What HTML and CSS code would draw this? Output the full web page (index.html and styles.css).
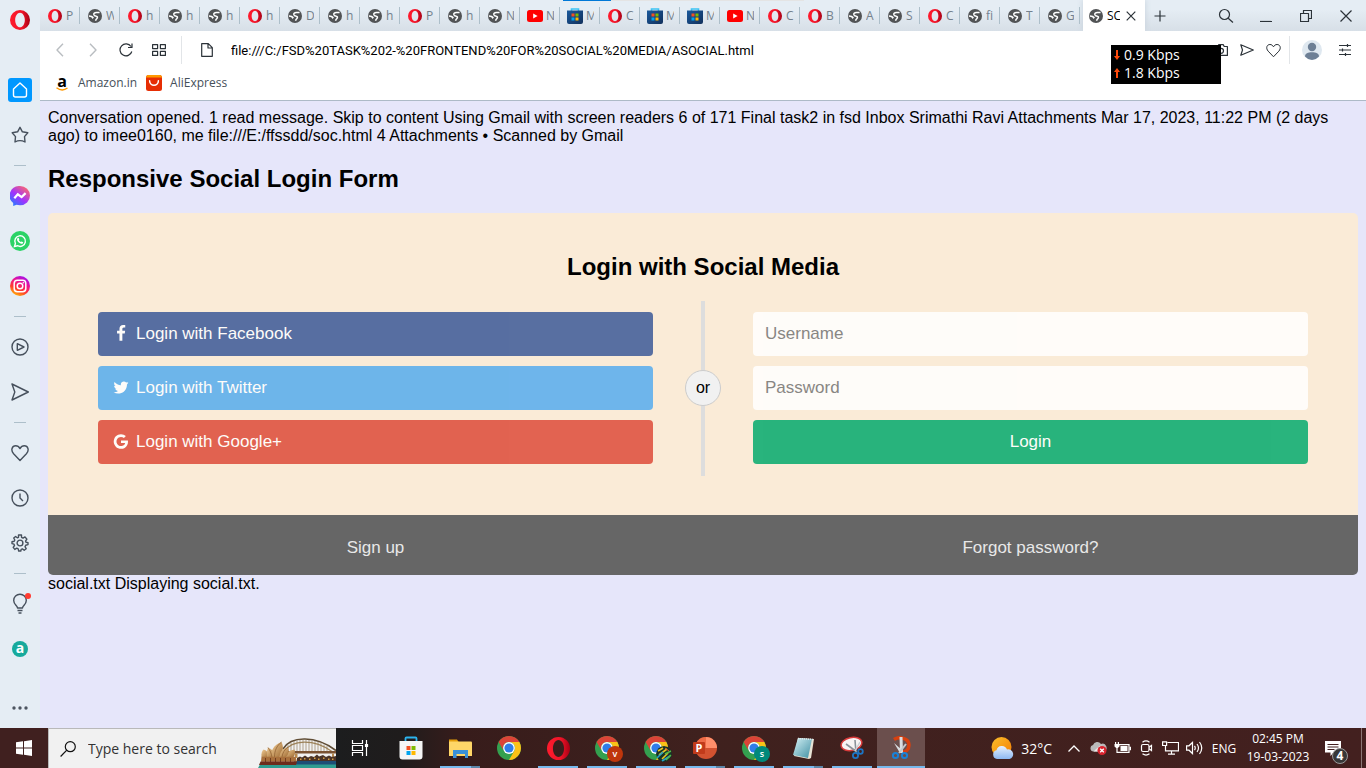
FILE: index.html
```html
<!DOCTYPE html>
<html lang="en">
<head>
<meta charset="utf-8">
<title>SOCIAL</title>
<meta name="viewport" content="width=device-width, initial-scale=1">
<link rel="stylesheet" href="styles.css">
</head>
<body>
<svg class="sprite" aria-hidden="true">
  <defs>
    <linearGradient id="redO" x1="0" y1="0" x2="1" y2="0"><stop offset="0" stop-color="#ff1b2d"/><stop offset=".6" stop-color="#f01428"/><stop offset="1" stop-color="#a70014"/></linearGradient>
    <linearGradient id="bag" x1="0" y1="0" x2="1" y2="1"><stop offset="0" stop-color="#1b5a9c"/><stop offset="1" stop-color="#12305c"/></linearGradient>
    <linearGradient id="msgr" x1="0" y1="1" x2=".8" y2="0"><stop offset="0" stop-color="#0a8cff"/><stop offset=".5" stop-color="#a033ff"/><stop offset="1" stop-color="#ff6a6a"/></linearGradient>
    <linearGradient id="insta" x1=".2" y1="1" x2=".7" y2="0"><stop offset="0" stop-color="#ffc400"/><stop offset=".35" stop-color="#ff3d2e"/><stop offset=".65" stop-color="#f0148c"/><stop offset="1" stop-color="#a010f0"/></linearGradient>
    <linearGradient id="sun" x1="0" y1="0" x2="1" y2="1"><stop offset="0" stop-color="#fbc02d"/><stop offset="1" stop-color="#f57c00"/></linearGradient>
    <linearGradient id="cloud" x1="0" y1="0" x2="0" y2="1"><stop offset="0" stop-color="#e8f1fd"/><stop offset="1" stop-color="#8db8f2"/></linearGradient>
    <linearGradient id="shell" x1="0" y1="0" x2="1" y2="1"><stop offset="0" stop-color="#efcb94"/><stop offset="1" stop-color="#a06c34"/></linearGradient>
    <linearGradient id="note" x1="0" y1="0" x2="1" y2="1"><stop offset="0" stop-color="#d6f2f6"/><stop offset="1" stop-color="#3f8fa3"/></linearGradient>
  </defs>
  <symbol id="opera" viewBox="0 0 24 24"><path fill="url(#redO)" fill-rule="evenodd" d="M12 0a12 12 0 1 0 0 24a12 12 0 1 0 0-24zM12 3.200c3.300 0 5.800 3.900 5.800 8.800s-2.500 8.800-5.800 8.800s-5.800-3.900-5.800-8.800s2.500-8.800 5.800-8.800z"/></symbol>
  <symbol id="globe" viewBox="0 0 16 16"><circle cx="8" cy="8" r="8" fill="#515355"/><path fill="none" stroke="#fff" stroke-width="1.700" d="M13.200 4H9.600Q6.400 4.200 6.600 6.200Q6.900 8 9.300 8.200Q11.600 8.700 10.400 10.600Q9 11.500 8.600 13.400"/><path fill="#fff" d="M1 7.200l3.400.5l2.400 1.800l-1.400 1.800l-1.700-1.900L1 8.800z"/></symbol>
  <symbol id="youtube" viewBox="0 0 16 12"><rect width="16" height="12" rx="2.500" fill="#f00"/><path fill="#fff" d="M6.200 3.500v5L10.600 6z"/></symbol>
  <symbol id="msstore" viewBox="0 0 16 16"><path fill="none" stroke="#3cc3f3" stroke-width="1.600" d="M4.500 3.500V1h7v2.500"/><path fill="url(#bag)" d="M0 2.500h16V14a2 2 0 0 1-2 2H2a2 2 0 0 1-2-2z"/><path fill="#f25022" d="M4.500 5.500h3v3h-3z"/><path fill="#7fba00" d="M8.500 5.500h3v3h-3z"/><path fill="#00a4ef" d="M4.500 9.500h3v3h-3z"/><path fill="#ffb900" d="M8.500 9.500h3v3h-3z"/></symbol>
  <symbol id="heart" viewBox="0 0 18 18"><path d="M9 16.500L2.600 9.800C-.6 6.200 1 1.800 4.700 1.800c2 0 3.300 1 4.300 2.800c1-1.800 2.300-2.800 4.300-2.800c3.700 0 5.300 4.400 2.100 8z"/></symbol>
  <symbol id="send" viewBox="0 0 18 18"><path d="M1 1L17.300 9L1 17L3.800 9z"/></symbol>
  <symbol id="chrome" viewBox="0 0 24 24"><circle cx="12" cy="12" r="12" fill="#34a04f"/><path fill="#db4437" d="M12 6h10.390A12 12 0 0 0 1.610 6L6.800 15A6 6 0 0 1 12 6z"/><path fill="#fbc116" d="M22.390 6H12a6 6 0 0 1 5.200 9L12 24A12 12 0 0 0 22.390 6z"/><circle cx="12" cy="12" r="5.900" fill="#fff"/><circle cx="12" cy="12" r="4.600" fill="#2f7de9"/></symbol>
</svg>

<div class="workspace">
  <nav class="sidebar" aria-label="Sidebar">
    <button class="side-logo" aria-label="Opera menu"><svg width="20" height="20"><use href="#opera"/></svg></button>
    <button class="side-item" aria-label="Speed dial"><span class="side-home"><svg class="line light" width="18" height="18" viewBox="0 0 18 18"><path d="M2.500 8L9 2l6.500 6v6a2 2 0 0 1-2 2h-9a2 2 0 0 1-2-2z"/></svg></span></button>
    <button class="side-item" aria-label="Pinboards"><svg class="line" width="18" height="18" viewBox="0 0 18 18"><path d="M9 1.300l2.400 4.500l5.400.9l-3.300 3.900l.5 5.400q-2.500-1.400-5-1.400T4 16l.5-5.400L1.200 6.700l5.400-.9z"/></svg></button>
    <hr class="side-rule">
    <button class="side-item" aria-label="Messenger"><svg width="20" height="20" viewBox="0 0 20 20"><path fill="url(#msgr)" d="M10 0a10 9.600 0 0 1 0 19.200c-1.500 0-2.500-.2-3.500-.5L3.200 20v-3A10 9.600 0 0 1 10 0z"/><path fill="none" stroke="#fff" stroke-width="2.200" d="M4.300 12.300l3.500-4l3.800 2.800l4-4"/></svg></button>
    <button class="side-item" aria-label="WhatsApp"><svg width="20" height="20" viewBox="0 0 20 20"><circle cx="10" cy="10" r="10" fill="#2bd366"/><path fill="none" stroke="#fff" stroke-width="1.400" d="M4.500 15.500l.9-3A5.300 5.300 0 1 1 7.500 14.700z"/><path fill="#fff" d="M7.600 7l1-.2l.8 1.600l-.6.9c.5.900 1.100 1.400 2 1.800l.8-.7l1.600.8c0 1.200-1.100 1.700-2 1.500c-2.400-.5-4.200-2.600-4.200-4.200c0-.6.300-1.200.6-1.500z"/></svg></button>
    <button class="side-item" aria-label="Instagram"><svg width="20" height="20" viewBox="0 0 20 20"><circle cx="10" cy="10" r="10" fill="url(#insta)"/><g fill="none" stroke="#fff" stroke-width="1.500"><rect x="4.200" y="4.200" width="11.600" height="11.600" rx="3.200"/><circle cx="10" cy="10" r="2.800"/></g><circle cx="13.300" cy="6.700" r=".8" fill="#fff"/></svg></button>
    <hr class="side-rule">
    <button class="side-item" aria-label="Player"><svg class="line" width="18" height="18" viewBox="0 0 18 18"><circle cx="9" cy="9" r="8"/><path d="M6.300 5.700L13 9l-6.700 3.300z"/></svg></button>
    <button class="side-item" aria-label="My Flow"><svg class="line" width="18" height="18"><use href="#send"/></svg></button>
    <hr class="side-rule">
    <button class="side-item" aria-label="Bookmarks"><svg class="line" width="18" height="18"><use href="#heart"/></svg></button>
    <button class="side-item" aria-label="History"><svg class="line" width="18" height="18" viewBox="0 0 18 18"><circle cx="9" cy="9" r="8"/><path d="M9 4.500V9l3 3"/></svg></button>
    <button class="side-item" aria-label="Settings"><svg class="line" width="18" height="18" viewBox="0 0 18 18"><circle cx="9" cy="9" r="2.900"/><path d="M7.500 1h3v2.300l1.500.8l2-1.200l1.900 2.300L14.600 7l.3 1.200l2.100.4v2l-2.300.6l-.7 1.500l1.200 2l-2 1.600l-1.800-1.400l-1.200.4L9.800 17H7.700l-.5-2.200l-1.400-.6l-2 1.200l-1.600-2l1.300-1.900l-.5-1.300L1 9.600V7.700l2.200-.5l.6-1.200l-1.100-2l1.900-1.500l1.700 1.300l1.200-.5z"/></svg></button>
    <hr class="side-rule">
    <button class="side-item" aria-label="Tips"><svg width="24" height="22" viewBox="0 0 24 22"><g class="line"><path d="M9.500 15c0-2.500-3.800-3.500-3.800-7.500a6.300 6.300 0 0 1 12.600 0c0 4-3.800 5-3.800 7.500z"/><path d="M9.500 17.500h5M10.500 20h3"/></g><circle cx="20" cy="3" r="3" fill="#ff3b30"/></svg></button>
    <button class="side-item" aria-label="Amazon assistant"><span class="side-a">a</span></button>
    <button class="side-more" aria-label="Sidebar setup"><svg width="16" height="4" viewBox="0 0 16 4" fill="#4d5560"><circle cx="2" cy="2" r="1.700"/><circle cx="8" cy="2" r="1.700"/><circle cx="14" cy="2" r="1.700"/></svg></button>
  </nav>

  <div class="browser">
    <div class="tabstrip">
      <div class="tabs">
        <button class="tab"><svg><use href="#opera"/></svg><span>P</span></button>
        <button class="tab"><svg><use href="#globe"/></svg><span>W</span></button>
        <button class="tab"><svg><use href="#opera"/></svg><span>h</span></button>
        <button class="tab"><svg><use href="#globe"/></svg><span>h</span></button>
        <button class="tab"><svg><use href="#globe"/></svg><span>h</span></button>
        <button class="tab"><svg><use href="#opera"/></svg><span>h</span></button>
        <button class="tab"><svg><use href="#globe"/></svg><span>D</span></button>
        <button class="tab"><svg><use href="#globe"/></svg><span>h</span></button>
        <button class="tab"><svg><use href="#globe"/></svg><span>h</span></button>
        <button class="tab"><svg><use href="#opera"/></svg><span>P</span></button>
        <button class="tab"><svg><use href="#globe"/></svg><span>h</span></button>
        <button class="tab"><svg><use href="#globe"/></svg><span>N</span></button>
        <button class="tab wide"><svg><use href="#youtube"/></svg><span>N</span></button>
        <button class="tab wide"><svg><use href="#msstore"/></svg><span>M</span></button>
        <button class="tab"><svg><use href="#opera"/></svg><span>C</span></button>
        <button class="tab wide"><svg><use href="#msstore"/></svg><span>M</span></button>
        <button class="tab wide"><svg><use href="#msstore"/></svg><span>M</span></button>
        <button class="tab wide"><svg><use href="#youtube"/></svg><span>N</span></button>
        <button class="tab"><svg><use href="#opera"/></svg><span>C</span></button>
        <button class="tab"><svg><use href="#opera"/></svg><span>B</span></button>
        <button class="tab"><svg><use href="#globe"/></svg><span>A</span></button>
        <button class="tab"><svg><use href="#globe"/></svg><span>S</span></button>
        <button class="tab"><svg><use href="#opera"/></svg><span>C</span></button>
        <button class="tab"><svg><use href="#globe"/></svg><span>fi</span></button>
        <button class="tab"><svg><use href="#globe"/></svg><span>T</span></button>
        <button class="tab"><svg><use href="#globe"/></svg><span>G</span></button>
      </div>
      <div class="tab-active"><svg class="tab-icon"><use href="#globe"/></svg><span class="tab-title">SC</span><button class="tab-close" aria-label="Close tab"><svg class="line dark" width="10" height="10" viewBox="0 0 10 10"><path d="M.7.7l8.600 8.600M9.300.7L.7 9.300"/></svg></button></div>
      <button class="tab-new" aria-label="New tab"><svg class="line dark" width="12" height="12" viewBox="0 0 12 12"><path d="M6 .5v11M.5 6h11"/></svg></button>
      <div class="window-controls">
        <button aria-label="Search tabs"><svg class="line dark" width="16" height="16" viewBox="0 0 16 16"><circle cx="6.500" cy="6.500" r="5"/><path d="M10.200 10.200l4.800 4.300"/></svg></button>
        <button aria-label="Minimise"><svg class="line dark" width="12" height="12" viewBox="0 0 12 12"><path d="M0 11.500h12"/></svg></button>
        <button aria-label="Restore"><svg class="line dark" width="12" height="12" viewBox="0 0 12 12"><path d="M.5 3.500h8v8h-8zM3.500 3.500v-3h8v8h-3"/></svg></button>
        <button aria-label="Close"><svg class="line dark" width="12" height="12" viewBox="0 0 12 12"><path d="M.5.5l11 11M11.500.5l-11 11"/></svg></button>
      </div>
    </div>

    <div class="toolbar">
      <button class="tool" aria-label="Back"><svg class="line faint" width="8" height="14" viewBox="0 0 8 14"><path d="M7 .8L1 7l6 6.200"/></svg></button>
      <button class="tool" aria-label="Forward"><svg class="line faint" width="8" height="14" viewBox="0 0 8 14"><path d="M1 .8L7 7l-6 6.200"/></svg></button>
      <button class="tool" aria-label="Reload"><svg class="line dark" width="14" height="14" viewBox="0 0 14 14"><path d="M12.800 8.500A6 6 0 1 1 12 3.500M13 .5v4H9"/></svg></button>
      <button class="tool" aria-label="Speed dial"><svg class="line dark" width="14" height="12" viewBox="0 0 14 12"><path d="M.6.600h5v4h-5zM8.400.600h5v4h-5zM.6 7.400h5v4h-5zM8.400 7.400h5v4h-5z"/></svg></button>
      <span class="tool-rule"></span>
      <button class="tool page-info" aria-label="Page information"><svg class="line dark" width="12" height="14" viewBox="0 0 12 14"><path d="M.7.700h6.600l4 4v8.600H.7zM7 .7V5h4.300"/></svg></button>
      <input class="address" type="text" aria-label="Address" value="file:///C:/FSD%20TASK%202-%20FRONTEND%20FOR%20SOCIAL%20MEDIA/ASOCIAL.html">
      <button class="tool slim" aria-label="Snapshot"><svg class="line dark" width="14" height="12" viewBox="0 0 14 12"><path d="M.6 2.500h3.200l1-1.900h4.400l1 1.900h3.200v8.900H.6z"/><circle cx="7" cy="6.800" r="2.500"/></svg></button>
      <button class="tool slim" aria-label="Send to My Flow"><svg class="line dark" width="14" height="12" viewBox="0 0 14 12"><path d="M.8.800L13.300 6L.8 11.200L2.500 6z"/></svg></button>
      <button class="tool slim" aria-label="Add to bookmarks"><svg class="line dark" width="15" height="15"><use href="#heart"/></svg></button>
      <span class="tool-rule short"></span>
      <button class="tool profile" aria-label="Profile"><svg width="20" height="20" viewBox="0 0 20 20"><circle cx="10" cy="10" r="10" fill="#dfe8f0"/><circle cx="10" cy="7" r="4.200" fill="#6d7f95"/><path fill="#6d7f95" d="M3 16.500c0-3 3-4.200 7-4.200s7 1.200 7 4.200A10 10 0 0 1 10 20a10 10 0 0 1-7-3.500z"/></svg></button>
      <button class="tool" aria-label="Easy setup"><svg class="line dark" width="12" height="12" viewBox="0 0 12 12"><path d="M0 1.500h12M0 6h12M0 10.500h12M8.500 0v3M3.500 4.500v3M6.500 9v3"/></svg></button>
    </div>

    <nav class="bookmarks" aria-label="Bookmarks bar">
      <a href="#amazon"><span class="amazon-a">a<svg width="12" height="4" viewBox="0 0 12 4"><path fill="none" stroke="#f90" stroke-width="1.400" d="M.5.700Q6 5 11.500 1"/></svg></span>Amazon.in</a>
      <a href="#aliexpress"><svg width="16" height="16" viewBox="0 0 16 16"><rect width="16" height="16" rx="2.500" fill="#e62e04"/><path fill="#f90" d="M2.500 0h11A2.500 2.500 0 0 1 16 2.500H0A2.500 2.500 0 0 1 2.500 0z"/><path fill="none" stroke="#fff" stroke-width="1.500" stroke-linecap="round" d="M3.600 5.800a4.400 4.400 0 0 0 8.800 0"/></svg>AliExpress</a>
    </nav>

    <main class="page">
      Conversation opened. 1 read message. Skip to content Using Gmail with screen readers 6 of 171 Final task2 in fsd Inbox Srimathi Ravi Attachments Mar 17, 2023, 11:22 PM (2 days ago) to imee0160, me file:///E:/ffssdd/soc.html 4 Attachments • Scanned by Gmail
      <h2>Responsive Social Login Form</h2>
      <form class="card" onsubmit="return false">
        <h2 class="card-title">Login with Social Media</h2>
        <div class="card-row">
          <div class="col">
            <a href="#fb" class="btn fb"><svg viewBox="0 0 1792 1792"><path d="M1343 12v264h-157q-86 0-116 36t-30 108v189h293l-39 296h-254v759h-306v-759h-255v-296h255v-218q0-186 104-288.500t277-102.500q147 0 228 12z"/></svg>Login with Facebook</a>
            <a href="#twitter" class="btn twitter"><svg viewBox="0 0 1792 1792"><path d="M1684 408q-67 98-162 167 1 14 1 42 0 130-38 259.500t-115.500 248.500-184.500 210.500-258 146-323 54.500q-271 0-496-145 35 4 78 4 225 0 401-138-105-2-188-64.500t-114-159.500q33 5 61 5 43 0 85-11-112-23-185.500-111.500t-73.500-205.500v-4q68 38 146 41-66-44-105-115t-39-154q0-88 44-163 121 149 294.500 238.500t371.500 99.500q-8-38-8-74 0-134 94.500-228.500t228.500-94.500q140 0 236 102 109-21 205-78-37 115-142 178 93-10 186-50z"/></svg>Login with Twitter</a>
            <a href="#google" class="btn google"><svg viewBox="0 0 1792 1792"><path d="M896 786h725q12 67 12 128 0 217-91 387.500t-259.500 266.500-386.500 96q-157 0-299-60.500t-245-163.500-163.500-245-60.500-299 60.500-299 163.500-245 245-163.500 299-60.500q300 0 515 201l-209 201q-123-119-306-119-129 0-238.500 65t-173.500 176.500-64 243.500 64 243.500 173.500 176.500 238.500 65q87 0 160-24t120-60 82-82 51.500-87 22.500-78h-436v-264z"/></svg>Login with Google+</a>
          </div>
          <div class="divider"><span class="or">or</span></div>
          <div class="col">
            <input class="field" type="text" placeholder="Username" aria-label="Username">
            <input class="field" type="password" placeholder="Password" aria-label="Password">
            <button class="btn submit" type="submit">Login</button>
          </div>
        </div>
      </form>
      <div class="card-footer">
        <a href="#signup">Sign up</a>
        <a href="#forgot">Forgot password?</a>
      </div>
      social.txt Displaying social.txt.
    </main>
  </div>

  <div class="top-progress"></div>
  <div class="netspeed">
    <div><svg width="6" height="10" viewBox="0 0 6 10" fill="#ff4a0c"><path d="M2 0h2v6h2L3 10L0 6h2z"/></svg>0.9 Kbps</div>
    <div><svg width="6" height="10" viewBox="0 0 6 10" fill="#ff4a0c"><path d="M2 10h2V4h2L3 0L0 4h2z"/></svg>1.8 Kbps</div>
  </div>
</div>

<footer class="taskbar">
  <button class="start" aria-label="Start"><svg width="16" height="16" viewBox="0 0 16 16" fill="#fff"><path d="M0 2.300L7 1.300v6.200H0zM8 1.200L16 0v7.500H8zM0 8.500h7v6.200l-7-1zM8 8.500h8V16l-8-1.200z"/></svg></button>
  <div class="search">
    <svg class="search-icon" width="16" height="16" viewBox="0 0 16 16"><circle cx="10.300" cy="5.700" r="5" fill="none" stroke="#111" stroke-width="1.200"/><path stroke="#111" stroke-width="1.200" d="M6.800 9.200L.6 15.500"/></svg>
    <input type="text" placeholder="Type here to search" aria-label="Search">
    <svg class="harbour" width="78" height="30" viewBox="0 0 78 30">
      <path fill="none" stroke="#5f4c34" stroke-width="1.600" d="M25 11C33-2.500 58-2.500 78 12.500"/>
      <path fill="none" stroke="#a08458" stroke-width="1.300" d="M26 14C34 1 56 1 74 13.500"/>
      <path stroke="#93805e" stroke-width=".7" d="M30 7v7M33 4.500V14M36 3v11M39 2v12M42 1.500V14M45 1.500V14M48 1.500V14M51 2v12M54 2.500V14M57 3v11M60 4v10M63 5v9M66 6.500V14M69 8v6"/>
      <path fill="#7a5232" d="M26 13h52v2.600H26z"/>
      <path fill="#b88a4f" d="M37 15.600h2.500V20H37zM74 15.600h2V20h-2z"/>
      <path fill="#4b3326" d="M39 20l3-1.500 2 1 3-2 3 2 3-1.500 3 1 3-2.500 2 2 4-1.500 3 2 3-1.500 3 1.500 4-1v6H39z"/>
      <path fill="#d6a045" d="M42 20.500h1.500V22H42zM46 20h1.500v1.500H46zM51 20.500h1.500V22H51zM56 19.500h1.500V21H56zM60 20.500h1.500V22H60zM65 19.500h1.500V21H65zM70 20.500h1.500V22H70zM74 20.500h1.500V22H74z"/>
      <path fill="#1d4f77" d="M36 23h42v4H36z"/>
      <path fill="#2f9d91" d="M2 26.500h76V30H0z"/>
      <path fill="url(#shell)" d="M28 19c.500-4 2.500-6.500 8.500-7.500c1 3 .5 5.500-1 7.500z"/>
      <path fill="url(#shell)" d="M3.500 19C3 15.500 4 13 5.500 11.500C9 12.500 11.500 15.500 12 19z"/>
      <path fill="url(#shell)" d="M9 19c0-3-.5-6 1-9.500c4 1.500 7 5 7.500 9.500z"/>
      <path fill="url(#shell)" d="M14 19c-2-6 1.500-12 9.500-15c2.500 5.500 1.500 11-2 15z"/>
      <path fill="url(#shell)" d="M21.500 19c.5-5 3-8.500 8.500-10c1.500 4 .5 7.500-2 10z"/>
      <path fill="none" stroke="#8a5a2c" stroke-width=".7" d="M16.500 19c0-6 2-11 7-15M24 19c.5-4 2.500-7.500 6-10M10 9.500c2 3 3.500 6 4 9.500"/>
      <path fill="#a9703c" d="M3.500 18.700h34l1.500 5H3z"/>
      <path stroke="#6f3d20" d="M7.500 20v4M12.500 20v4M17.500 20v4M22.500 20v4M27.500 20v4M32.500 20v4"/>
      <path fill="#6d2c1c" d="M2.500 23.500H39l-1 3.500H1z"/>
    </svg>
  </div>
  <div class="apps">
    <button class="app task-view" aria-label="Task View"><svg width="18" height="16" viewBox="0 0 18 16" fill="none" stroke="#fff" stroke-width="1.200"><path d="M1.500 0v3.500h10V0M1.500 16v-3.500h10V16M1.500 5.500h10v5h-10zM15.500 0v16"/><path fill="#fff" d="M14.500 4.500h2v2h-2z"/></svg></button>
    <button class="app" aria-label="Microsoft Store"><svg width="24" height="24" viewBox="0 0 24 24"><path fill="none" stroke="#2cb4ee" stroke-width="1.800" d="M6.500 6V2.500a1 1 0 0 1 1-1h9a1 1 0 0 1 1 1V6"/><path fill="#f5f5f5" d="M.5 5h23v15.500a3 3 0 0 1-3 3h-17a3 3 0 0 1-3-3z"/><path fill="#f25022" d="M7.500 10h4v4h-4z"/><path fill="#7fba00" d="M12.500 10h4v4h-4z"/><path fill="#00a4ef" d="M7.500 15h4v4h-4z"/><path fill="#ffb900" d="M12.500 15h4v4h-4z"/></svg></button>
    <button class="app open multi" aria-label="File Explorer"><svg width="23" height="20" viewBox="0 0 23 20"><path fill="#e59e0b" d="M0 1.500h8l2 3H0z"/><path fill="#ffd768" d="M0 3.500h22a1 1 0 0 1 1 1V18H0z"/><path fill="#3b91d8" d="M4 20v-8h15v8h-3v-4H7.500v4z"/></svg></button>
    <button class="app" aria-label="Chrome"><svg width="24" height="24"><use href="#chrome"/></svg></button>
    <button class="app open" aria-label="Opera"><svg width="23" height="23"><use href="#opera"/></svg></button>
    <button class="app open" aria-label="Chrome profile V"><svg width="24" height="24"><use href="#chrome"/></svg><span class="badge rust">v</span></button>
    <button class="app open" aria-label="Chrome profile"><svg width="24" height="24"><use href="#chrome"/></svg><svg class="badge" viewBox="0 0 16 16"><circle cx="8" cy="8" r="8" fill="#183428"/><path stroke="#e5c520" stroke-width="1.600" d="M2 5l5-3M3 9l8-6M6 13l6-6"/><path stroke="#27a2c4" stroke-width="1.600" d="M1 12l6-6M6 15l8-5"/><path stroke="#54b847" stroke-width="1.500" d="M9 8l6-3M10 14l5-5"/><path stroke="#e4572c" d="M9 2l4 3"/></svg></button>
    <button class="app open multi" aria-label="PowerPoint"><svg width="24" height="24" viewBox="0 0 24 24"><circle cx="13" cy="12" r="11" fill="#d35230"/><path fill="#ff8f6b" d="M13 1a11 11 0 0 1 11 11H13z"/><path fill="#ed6c47" d="M13 1A11 11 0 0 0 2 12h11z"/><rect y="6" width="12" height="12" rx="1" fill="#c13b1b"/><text x="6" y="16" text-anchor="middle" class="ppt">P</text></svg></button>
    <button class="app open" aria-label="Chrome profile S"><svg width="24" height="24"><use href="#chrome"/></svg><span class="badge teal">s</span></button>
    <button class="app open multi" aria-label="Notepad"><svg width="24" height="24" viewBox="0 0 24 24"><path fill="#e8e3d5" d="M7 2l16 1l-3 19l-2 1L3 20z"/><path fill="url(#note)" d="M7 2l14 1l-4 19L2 19z"/><path stroke="#dce9ea" stroke-width="1.500" stroke-dasharray="1 1" d="M7 2.500l15 1"/></svg></button>
    <button class="app open" aria-label="Snip &amp; Sketch"><svg width="24" height="24" viewBox="0 0 24 24"><ellipse cx="11.500" cy="8" rx="10.500" ry="6.500" fill="#f7f3f3" stroke="#d83a3a" stroke-width="1.500" transform="rotate(-12 11.500 8)"/><path stroke="#8b9299" stroke-width="1.600" d="M6 8l11 8M15 4l1 13"/><path stroke="#c9ced2" stroke-width="1.500" d="M20 6l-5 9"/><g fill="none" stroke="#1c74c4" stroke-width="1.800"><circle cx="15.500" cy="19.500" r="2.600"/><circle cx="20.500" cy="15.500" r="2.300"/></g></svg></button>
    <button class="app current" aria-label="Snipping Tool"><svg width="24" height="24" viewBox="0 0 24 24"><path fill="none" stroke="#d8400f" stroke-width="3.500" d="M5 3.500C10 0 20 2 20 9c0 4.500-3 7-7 7"/><path fill="#d9dde0" d="M10.500 1h3l.5 16h-3zM5 7l8 7-2 3z"/><path stroke="#c3c8cc" stroke-width="2" d="M17 8l-7 9"/><g fill="none" stroke="#1982d8" stroke-width="2"><circle cx="6.500" cy="19.500" r="2.600"/><circle cx="15.500" cy="19.500" r="2.600"/></g></svg></button>
  </div>
  <div class="tray">
    <button class="weather"><svg width="23" height="22" viewBox="0 0 23 22"><circle cx="10.500" cy="10" r="10" fill="url(#sun)"/><path fill="url(#cloud)" d="M6 22a4.500 4.500 0 0 1-.5-8.800A5.500 5.500 0 0 1 16 12.500A4.800 4.800 0 0 1 18.500 22z"/></svg>32°C</button>
    <button class="tray-item chevron" aria-label="Show hidden icons"><svg width="12" height="7" viewBox="0 0 12 7" fill="none" stroke="#fff" stroke-width="1.300"><path d="M.5 6.500L6 1l5.500 5.500"/></svg></button>
    <button class="tray-item" aria-label="OneDrive"><svg width="17" height="14" viewBox="0 0 17 14"><path fill="#b9b9b9" d="M3.500 10.500A3.300 3.300 0 0 1 3 4A4.500 4.500 0 0 1 11 3a4 4 0 0 1 3 7.500z"/><path fill="#ececec" d="M3.500 10.500l6-5.500a4 4 0 0 1 5 5.500z"/><circle cx="12" cy="9.500" r="4.500" fill="#d9232e"/><path stroke="#fff" stroke-width="1.300" d="M10.200 7.700l3.600 3.600M13.800 7.700l-3.600 3.600"/></svg></button>
    <button class="tray-item" aria-label="Battery"><svg width="17" height="12" viewBox="0 0 17 12"><path fill="none" stroke="#fff" stroke-width="1.200" d="M5 2.600h10v7.800H5M1.600 0v2.500M4.400 0v2.500M3 5v5.400h2"/><path fill="#fff" d="M.5 2h5v2.500L3.800 6H2.200L.5 4.500zM6.500 4h7v5h-7zM15.500 4.800h1.500v3.400h-1.500z"/></svg></button>
    <button class="tray-item" aria-label="Meet Now"><svg width="13" height="16" viewBox="0 0 13 16" fill="none" stroke="#fff" stroke-width="1.200"><rect x="1.500" y="4.500" width="7.500" height="7" rx="1.500"/><path d="M9 7.200l2.500-1.700v5L9 8.800M2.500 2.200c2-1.400 5-1.400 7 0M2.500 13.800c2 1.400 5 1.400 7 0"/></svg></button>
    <button class="tray-item" aria-label="Network"><svg width="17" height="14" viewBox="0 0 17 14" fill="none" stroke="#fff" stroke-width="1.200"><path d="M5.500 1.500h11v8.300H3.500V5M9.500 10v3M6 13.200h7M.6.800h4v3.700h-4z"/></svg></button>
    <button class="tray-item" aria-label="Volume"><svg width="17" height="14" viewBox="0 0 17 14" fill="none" stroke="#fff" stroke-width="1.200"><path d="M.6 4.800h2.400L6.500 1.500v11L3 9.200H.6zM8.500 4.800q1.500 2.200 0 4.400M11 3q3 4 0 8M13.500 1q4.500 6 0 12"/></svg></button>
    <button class="lang">ENG</button>
    <button class="clock"><span>02:45 PM</span><span>19-03-2023</span></button>
    <button class="notify" aria-label="4 notifications"><svg width="16" height="15" viewBox="0 0 16 15"><path fill="#fff" d="M0 0h16v11.500H8.500L5.500 15v-3.500H0z"/><path stroke="#43201f" stroke-width="1.200" d="M2.500 3.500h11M2.500 6h11M2.500 8.500h7"/></svg><span class="count">4</span></button>
  </div>
</footer>
</body>
</html>
```
FILE: styles.css
```css
* { box-sizing: border-box; }

body {
  margin: 0;
  min-height: 100vh;
  display: flex;
  flex-direction: column;
  font-family: "Open Sans", "Noto Sans", sans-serif;
  font-size: 12px;
}

button {
  margin: 0;
  padding: 0;
  border: 0;
  background: none;
  color: inherit;
  font: inherit;
}

svg { display: block; flex: none; }

.sprite { position: absolute; width: 0; height: 0; }

.line { fill: none; stroke: #46505c; stroke-width: 1.4; stroke-linejoin: round; }
.line.dark { stroke: #2b3238; stroke-width: 1.2; }
.line.faint { stroke: #b9bdc1; }
.line.light { stroke: #fff; }

.workspace {
  position: relative;
  flex: 1;
  display: flex;
}

/* Sidebar */
.sidebar {
  width: 40px;
  flex: none;
  display: flex;
  flex-direction: column;
  background: #e5edf4;
}

.sidebar button {
  display: flex;
  align-items: center;
  justify-content: center;
}

.side-logo { height: 40px; margin-bottom: 27px; }
.side-item { height: 45px; }
.side-more { height: 40px; margin-top: auto; }

.side-home {
  width: 24px;
  height: 24px;
  display: grid;
  place-items: center;
  border-radius: 3px;
  background: #0098ff;
}

.side-rule {
  width: 12px;
  height: 1px;
  margin: 8px auto 7px;
  border: 0;
  background: #adbfca;
}

.side-a {
  width: 16px;
  height: 16px;
  border-radius: 50%;
  background: #17aa9c;
  color: #fff;
  font-weight: 700;
  font-size: 14px;
  line-height: 13px;
}

/* Browser chrome */
.browser {
  flex: 1;
  min-width: 0;
  display: flex;
  flex-direction: column;
  background: #fff;
}

.tabstrip {
  height: 31px;
  display: flex;
  background: linear-gradient(#e5edf4 30%, #d7dfe7);
}

.tabs { display: flex; }

.tab {
  width: 40px;
  display: flex;
  align-items: center;
  gap: 4px;
  padding-left: 8px;
  background: linear-gradient(#adbfca, #adbfca) right 7px / 1px 17px no-repeat;
  color: #74818d;
}

.tab svg { width: 14px; height: 14px; }
.tab.wide { padding-left: 7px; gap: 3px; }
.tab.wide svg { width: 16px; height: 16px; }
.tab span { width: 8px; overflow: hidden; text-align: left; }

.tab-active {
  width: 62px;
  margin-left: 3px;
  display: flex;
  align-items: center;
  padding: 0 9px 0 6px;
  background: #fff;
  box-shadow: 0 0 6px #c6d0da;
  clip-path: inset(0 -6px);
}

.tab-icon { width: 14px; height: 14px; margin-right: 4px; }
.tab-title { width: 13px; overflow: hidden; }
.tab-close { margin-left: auto; }
.tab-new { width: 30px; display: grid; place-items: center; }

.window-controls { display: flex; margin-left: auto; }
.window-controls button { width: 40px; display: grid; place-items: center; }

.toolbar {
  height: 38px;
  display: flex;
  align-items: center;
  padding: 0 5px 0 3px;
}

.tool { width: 33px; height: 33px; display: grid; place-items: center; }
.tool.slim { width: 26px; }
.tool-rule { width: 1px; height: 28px; margin: 0 8px 0 6px; background: #e2e5e8; }
.tool-rule.short { margin: 0 5px 0 3px; }

.address {
  flex: 1;
  min-width: 0;
  height: 28px;
  padding: 0 8px;
  border: 0;
  outline: 0;
  color: #000;
  font-family: Roboto, "Open Sans", sans-serif;
  font-size: 13px;
}

.bookmarks {
  height: 32px;
  display: flex;
  align-items: center;
  gap: 9px;
  padding: 0 14px 4px;
  border-bottom: 1px solid #adbac7;
}

.bookmarks a {
  display: flex;
  align-items: center;
  gap: 8px;
  color: #46505a;
  text-decoration: none;
}

.amazon-a {
  width: 16px;
  display: flex;
  flex-direction: column;
  align-items: center;
  color: #000;
  font-weight: 700;
  font-size: 16px;
  line-height: 12px;
}

.top-progress {
  position: absolute;
  top: 0;
  left: 563px;
  width: 241px;
  height: 1px;
  background: linear-gradient(90deg, #0078d7 48px, #e4e4e4 48px);
}

.netspeed {
  position: absolute;
  top: 45px;
  right: 145px;
  width: 110px;
  height: 39px;
  padding: 1px 3px;
  background: #000;
  color: #fff;
  font-size: 14px;
  line-height: 18px;
}

.netspeed div { display: flex; align-items: center; gap: 4px; }

/* Page */
.page {
  flex: 1;
  padding: 8px;
  background: #e6e6fa;
  color: #000;
  font-family: "Liberation Sans", Arial, sans-serif;
  font-size: 16px;
  line-height: 18px;
}

.page h2 { margin: 20px 0; font-size: 24px; line-height: 28px; }

.card {
  padding: 20px 0 39px;
  border-radius: 5px 5px 0 0;
  background: #faebd7;
  overflow: hidden;
}

.page .card-title { text-align: center; }

.card-row {
  display: grid;
  grid-template-columns: 1fr 100px 1fr;
  padding: 0 50px;
}

.col {
  display: flex;
  flex-direction: column;
  gap: 10px;
  padding-top: 11px;
}

.btn, .field {
  width: 100%;
  height: 44px;
  padding: 12px;
  border: 0;
  border-radius: 4px;
  opacity: 0.85;
  font-family: inherit;
  font-size: 17px;
  line-height: 20px;
}

.btn {
  display: flex;
  align-items: center;
  gap: 4px;
  color: #fff;
  text-decoration: none;
}

.btn svg { width: 22px; height: 17px; margin-bottom: 2px; fill: #fff; }
.btn:hover, .field:hover { opacity: 1; }
.fb { background: #3b5998; }
.twitter { background: #55acee; }
.google { background: #dd4b39; }
.submit { justify-content: center; background: #04aa6d; }
.field { background: #fff; }

.divider {
  height: 175px;
  display: grid;
  place-items: center;
  padding-bottom: 2px;
  background: linear-gradient(#ddd, #ddd) center / 4px 100% no-repeat;
}

.or {
  width: 36px;
  height: 36px;
  border: 1px solid #ccc;
  border-radius: 50%;
  background: #f1f1f1;
  line-height: 34px;
  text-align: center;
}

.card-footer {
  display: grid;
  grid-template-columns: 1fr 1fr;
  padding: 11px 0 5px;
  border-radius: 0 0 5px 5px;
  background: #666;
}

.card-footer a {
  padding: 12px;
  opacity: 0.85;
  color: #fff;
  font-size: 17px;
  line-height: 20px;
  text-align: center;
  text-decoration: none;
}

/* Taskbar */
.taskbar {
  height: 40px;
  display: flex;
  background: linear-gradient(90deg, #40201f 0, #40201f 336px, #1c1d1e 336px, #1f1c1c 400px, #371c1b 460px, #3f211e 700px, #43201f);
  color: #fff;
}

.start { width: 48px; display: grid; place-items: center; }

.search {
  width: 288px;
  display: flex;
  align-items: center;
  padding-left: 11px;
  border: 1px solid #b9b9b9;
  border-right: 0;
  border-bottom: 0;
  background: #f1f1f1;
}

.search input {
  flex: 1;
  min-width: 0;
  padding: 0 0 0 12px;
  border: 0;
  outline: 0;
  background: none;
  font: inherit;
  font-size: 14px;
}

.search input::placeholder { color: #333; }
.harbour { align-self: flex-end; }

.apps { display: flex; gap: 1px; }

.app {
  position: relative;
  width: 48px;
  display: grid;
  place-items: center;
}

.app.task-view { margin-right: 2px; }
.app.open { background: linear-gradient(#76b9ed, #76b9ed) center bottom / 40px 2px no-repeat; }
.app.multi { background: linear-gradient(90deg, #76b9ed 31px, #5c86a8 31px) center bottom / 40px 2px no-repeat; }
.app.current { background: linear-gradient(#76b9ed, #76b9ed) bottom / 100% 2px no-repeat #6b4f4d; }

.badge {
  position: absolute;
  right: 8px;
  bottom: 6px;
  width: 16px;
  height: 16px;
  border-radius: 50%;
  font-size: 9px;
  font-weight: 600;
  line-height: 15px;
}

.rust { background: #bf360c; }
.teal { background: #00897b; }
.ppt { fill: #fff; font-size: 11px; font-weight: 700; }

.tray { display: flex; margin-left: auto; padding-right: 4px; }
.tray button { display: flex; align-items: center; justify-content: center; }
.weather { gap: 7px; margin-right: 10px; font-size: 14px; }
.tray-item { width: 24px; }
.lang { width: 36px; }
.clock { width: 72px; flex-direction: column; line-height: 18px; }
.tray .notify {
  position: relative;
  width: 48px;
  border-right: 1px solid #8b7675;
  padding-right: 10px;
}

.count {
  position: absolute;
  right: 13px;
  bottom: 4px;
  width: 16px;
  height: 16px;
  border: 1px solid #9a9a9a;
  border-radius: 50%;
  background: #383838;
  font-weight: 700;
  line-height: 14px;
}
```
